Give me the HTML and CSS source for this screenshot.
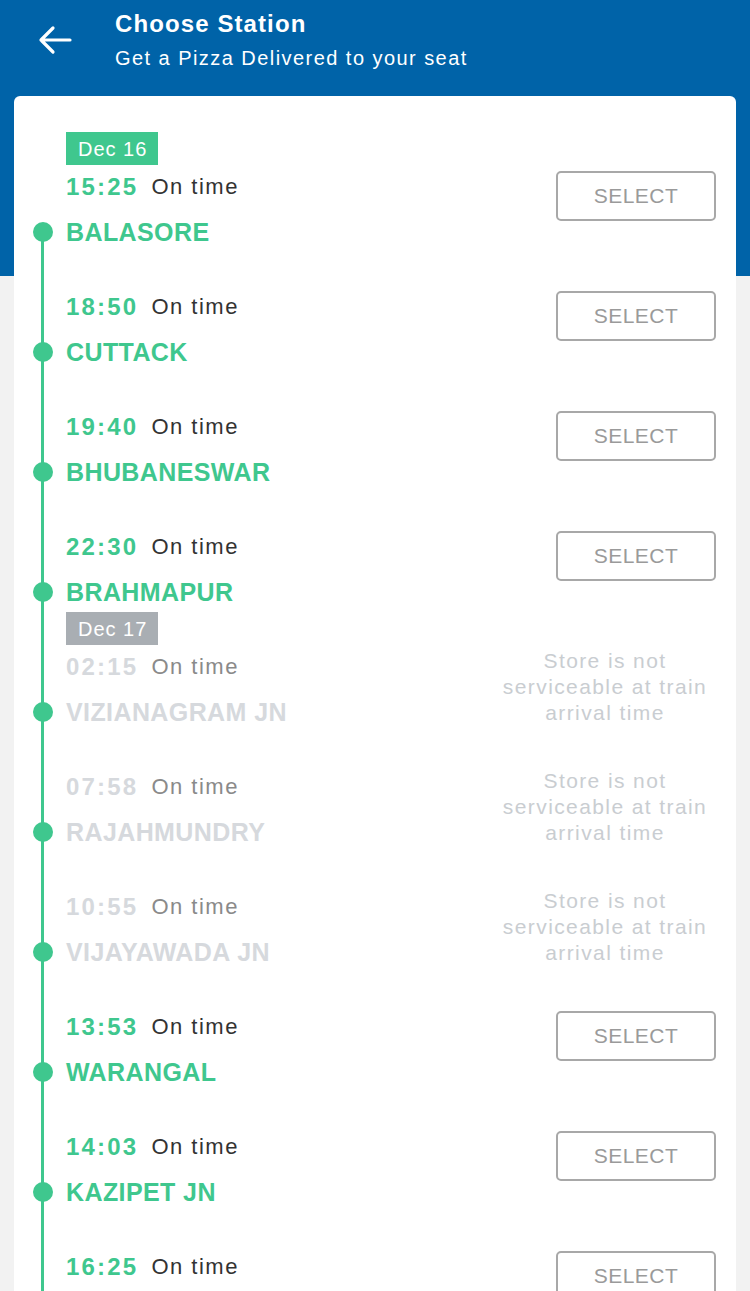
FILE: index.html
```html
<!DOCTYPE html>
<html lang="en">
<head>
<meta charset="utf-8">
<title>Choose Station</title>
<link rel="stylesheet" href="styles.css">
</head>
<body>
<header class="topbar">
  <button class="back" aria-label="Back">
    <svg width="34" height="30" viewBox="0 0 34 30" fill="none" stroke="#fff" stroke-width="3.2" stroke-linecap="round" stroke-linejoin="round"><path d="M32 15H3M15 3L3 15L15 27"/></svg>
  </button>
  <div class="titles">
    <h1 class="title">Choose Station</h1>
    <p class="subtitle">Get a Pizza Delivered to your seat</p>
  </div>
</header>
<main class="card">
  <div class="stops">
    <div class="stop">
      <div class="date-slot"><span class="badge">Dec 16</span></div>
      <div class="stop-body">
        <div class="stop-info">
          <div class="time-line"><span class="time">15:25</span><span class="status">On time</span></div>
          <div class="station">BALASORE</div>
        </div>
        <button class="select">SELECT</button>
      </div>
    </div>
    <div class="stop">
      <div class="date-slot"></div>
      <div class="stop-body">
        <div class="stop-info">
          <div class="time-line"><span class="time">18:50</span><span class="status">On time</span></div>
          <div class="station">CUTTACK</div>
        </div>
        <button class="select">SELECT</button>
      </div>
    </div>
    <div class="stop">
      <div class="date-slot"></div>
      <div class="stop-body">
        <div class="stop-info">
          <div class="time-line"><span class="time">19:40</span><span class="status">On time</span></div>
          <div class="station">BHUBANESWAR</div>
        </div>
        <button class="select">SELECT</button>
      </div>
    </div>
    <div class="stop">
      <div class="date-slot"></div>
      <div class="stop-body">
        <div class="stop-info">
          <div class="time-line"><span class="time">22:30</span><span class="status">On time</span></div>
          <div class="station">BRAHMAPUR</div>
        </div>
        <button class="select">SELECT</button>
      </div>
    </div>
    <div class="stop disabled">
      <div class="date-slot"><span class="badge badge-gray">Dec 17</span></div>
      <div class="stop-body">
        <div class="stop-info">
          <div class="time-line"><span class="time">02:15</span><span class="status">On time</span></div>
          <div class="station">VIZIANAGRAM JN</div>
        </div>
        <p class="unavailable">Store is not serviceable at train arrival time</p>
      </div>
    </div>
    <div class="stop disabled">
      <div class="date-slot"></div>
      <div class="stop-body">
        <div class="stop-info">
          <div class="time-line"><span class="time">07:58</span><span class="status">On time</span></div>
          <div class="station">RAJAHMUNDRY</div>
        </div>
        <p class="unavailable">Store is not serviceable at train arrival time</p>
      </div>
    </div>
    <div class="stop disabled">
      <div class="date-slot"></div>
      <div class="stop-body">
        <div class="stop-info">
          <div class="time-line"><span class="time">10:55</span><span class="status">On time</span></div>
          <div class="station">VIJAYAWADA JN</div>
        </div>
        <p class="unavailable">Store is not serviceable at train arrival time</p>
      </div>
    </div>
    <div class="stop">
      <div class="date-slot"></div>
      <div class="stop-body">
        <div class="stop-info">
          <div class="time-line"><span class="time">13:53</span><span class="status">On time</span></div>
          <div class="station">WARANGAL</div>
        </div>
        <button class="select">SELECT</button>
      </div>
    </div>
    <div class="stop">
      <div class="date-slot"></div>
      <div class="stop-body">
        <div class="stop-info">
          <div class="time-line"><span class="time">14:03</span><span class="status">On time</span></div>
          <div class="station">KAZIPET JN</div>
        </div>
        <button class="select">SELECT</button>
      </div>
    </div>
    <div class="stop">
      <div class="date-slot"></div>
      <div class="stop-body">
        <div class="stop-info">
          <div class="time-line"><span class="time">16:25</span><span class="status">On time</span></div>
          <div class="station">SECUNDERABAD JN</div>
        </div>
        <button class="select">SELECT</button>
      </div>
    </div>
  </div>
</main>
</body>
</html>
```

FILE: styles.css
```css
* { box-sizing: border-box; }

html, body {
  margin: 0;
  padding: 0;
}

body {
  font-family: "Liberation Sans", Arial, sans-serif;
  background: linear-gradient(#0063a8 0, #0063a8 276px, #f2f2f2 276px);
  background-repeat: no-repeat;
  background-color: #f2f2f2;
  height: 1291px;
  overflow: hidden;
}

.topbar {
  height: 96px;
  display: flex;
  align-items: flex-start;
  padding: 0 0 0 38px;
  color: #fff;
}

.back {
  margin: 25px 0 0 0;
  padding: 0;
  width: 36px;
  height: 30px;
  border: 0;
  background: transparent;
  display: flex;
  align-items: center;
}

.titles {
  margin-left: 41px;
  padding-top: 6px;
}

.title {
  margin: 0;
  font-size: 24px;
  font-weight: 700;
  line-height: 36px;
  letter-spacing: 1.1px;
}

.subtitle {
  margin: 0;
  font-size: 20px;
  line-height: 32px;
  letter-spacing: 1.45px;
}

.card {
  margin: 0 14px;
  background: #fff;
  border-radius: 6px 6px 0 0;
  padding: 36px 20px 0 52px;
  min-height: 1200px;
}

.stops {
  position: relative;
}

.stops::before {
  content: "";
  position: absolute;
  left: -25px;
  top: 100px;
  bottom: 0;
  width: 3px;
  background: #3fc78e;
}

.stop {
  height: 120px;
}

.date-slot {
  height: 33px;
  margin-bottom: 5px;
}

.badge {
  display: inline-block;
  height: 33px;
  line-height: 34px;
  padding: 0 11px 0 12px;
  background: #3fc78e;
  color: #fff;
  font-size: 20px;
  letter-spacing: 1px;
}

.badge-gray {
  background: #a9aeb3;
}

.stop-body {
  display: flex;
  justify-content: space-between;
  align-items: flex-start;
}

.time-line {
  height: 34px;
  display: flex;
  align-items: center;
  white-space: nowrap;
}

.time {
  font-size: 24px;
  font-weight: 700;
  color: #3fc78e;
  letter-spacing: 2.2px;
  margin-right: 13px;
}

.status {
  font-size: 22px;
  color: #333;
  letter-spacing: 1.5px;
}

.station {
  position: relative;
  margin-top: 11px;
  height: 34px;
  line-height: 34px;
  font-size: 25px;
  font-weight: 700;
  color: #3fc78e;
  letter-spacing: 0.4px;
  white-space: nowrap;
}

.station::before {
  content: "";
  position: absolute;
  left: -33px;
  top: 7px;
  width: 20px;
  height: 20px;
  border-radius: 50%;
  background: #3fc78e;
}

.select {
  margin-top: 1px;
  width: 160px;
  height: 50px;
  border: 2px solid #a8a8a8;
  border-radius: 5px;
  background: #fff;
  color: #9a9a9a;
  font-family: "Liberation Sans", Arial, sans-serif;
  font-size: 21px;
  letter-spacing: 0.5px;
  padding: 0;
}

.unavailable {
  margin: -2px 0 0 0;
  width: 222px;
  text-align: center;
  font-size: 21px;
  line-height: 26px;
  color: #c9cdd1;
  letter-spacing: 1.4px;
}

.disabled .time,
.disabled .station {
  color: #d6d9dd;
}

.disabled .status {
  color: #8a8a8a;
}
```
